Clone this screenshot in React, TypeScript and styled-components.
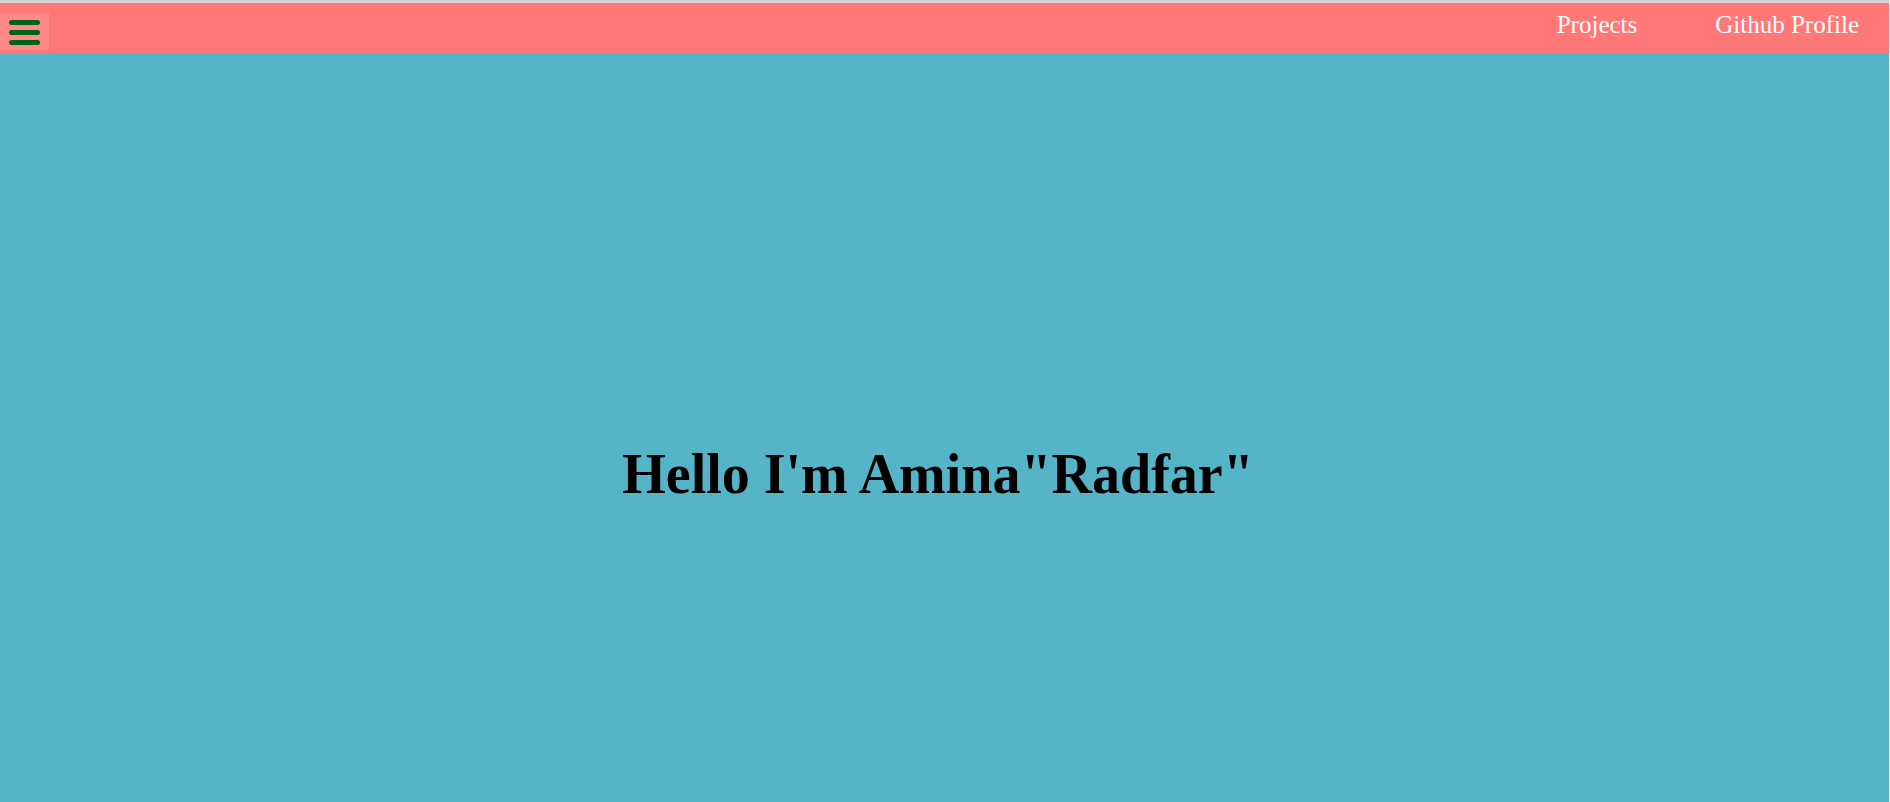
import React from "react";
import styled, { createGlobalStyle } from "styled-components";

const GlobalStyle = createGlobalStyle`
  html, body {
    margin: 0;
    padding: 0;
  }
  body {
    font-family: "Liberation Serif", "Times New Roman", serif;
  }
`;

const Page = styled.div`
  min-height: 100vh;
  box-sizing: border-box;
  background: #56b4c9;
  border-top: 3px solid #d3d3d3;
  border-right: 1px solid #e4f2f5;
  display: flex;
  flex-direction: column;
`;

const Header = styled.header`
  height: 51px;
  background: #ff7878;
  display: flex;
  justify-content: space-between;
  align-items: flex-start;
`;

const MenuButton = styled.button`
  margin-top: 10px;
  width: 49px;
  height: 37px;
  box-sizing: border-box;
  padding: 7px 9px 5px;
  border: none;
  background: #ff8986;
  display: flex;
  flex-direction: column;
  gap: 5px;
  cursor: pointer;
`;

const Bar = styled.span`
  display: block;
  width: 31px;
  height: 5px;
  border-radius: 3px;
  background: #006414;
`;

const Nav = styled.nav`
  display: flex;
  gap: 78px;
  padding: 8px 30px 0 0;
`;

const NavLink = styled.a`
  color: #ffffff;
  font-size: 25px;
  text-decoration: none;
  cursor: pointer;
`;

const Main = styled.main`
  flex: 1;
  padding: 388px 13px 0 0;
`;

const Title = styled.h1`
  margin: 0;
  text-align: center;
  font-size: 56px;
  font-weight: bold;
  color: #000;
`;

export default function App() {
  return (
    <>
      <GlobalStyle />
      <Page>
        <Header>
          <MenuButton aria-label="menu">
            <Bar />
            <Bar />
            <Bar />
          </MenuButton>
          <Nav>
            <NavLink>Projects</NavLink>
            <NavLink>Github Profile</NavLink>
          </Nav>
        </Header>
        <Main>
          <Title>Hello I'm Amina"Radfar"</Title>
        </Main>
      </Page>
    </>
  );
}
